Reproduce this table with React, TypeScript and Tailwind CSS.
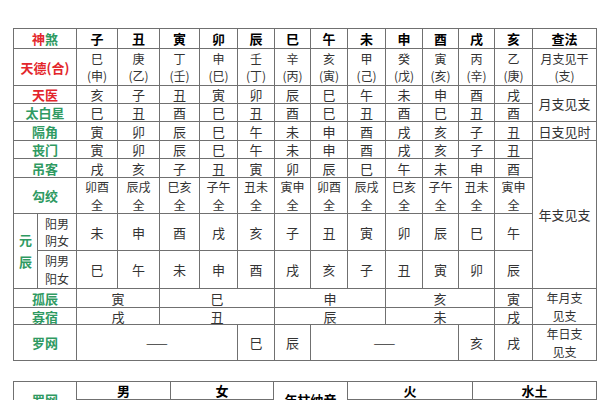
const branches = ['子', '丑', '寅', '卯', '辰', '巳', '午', '未', '申', '酉', '戌', '亥']

const tiande = ['巳', '庚', '丁', '申', '壬', '辛', '亥', '甲', '癸', '寅', '丙', '乙']
const tiandeHe = ['申', '乙', '壬', '巳', '丁', '丙', '寅', '己', '戊', '亥', '辛', '庚']
const tianyi = ['亥', '子', '丑', '寅', '卯', '辰', '巳', '午', '未', '申', '酉', '戌']
const taibai = ['巳', '丑', '酉', '巳', '丑', '酉', '巳', '丑', '酉', '巳', '丑', '酉']
const gejiao = ['寅', '卯', '辰', '巳', '午', '未', '申', '酉', '戌', '亥', '子', '丑']
const diaoke = ['戌', '亥', '子', '丑', '寅', '卯', '辰', '巳', '午', '未', '申', '酉']
const goujiao = ['卯酉', '辰戌', '巳亥', '子午', '丑未', '寅申', '卯酉', '辰戌', '巳亥', '子午', '丑未', '寅申']
const yuanchen1 = ['未', '申', '酉', '戌', '亥', '子', '丑', '寅', '卯', '辰', '巳', '午']
const yuanchen2 = ['巳', '午', '未', '申', '酉', '戌', '亥', '子', '丑', '寅', '卯', '辰']

const widths = [24, 39, 41, 42, 40, 38, 37, 36, 37, 38, 37, 36, 36, 38, 64]

const td = 'border border-[#707070] text-center align-middle p-0'
const two = ' text-[12px] leading-[17.5px]'
const red = 'text-[#e3262b] font-bold'
const green = 'text-[#2f9a62] font-bold'
const head = ' font-bold text-black'

function Cells({ items }: { items: string[] }) {
  return (
    <>
      {items.map((c, i) => (
        <td key={i} className={td}>
          {c}
        </td>
      ))}
    </>
  )
}

export default function App() {
  return (
    <div
      className="w-[600px] h-[400px] overflow-hidden bg-white pt-[28px] pl-[13px] text-[13px] leading-[15px] text-[#333]"
      style={{ fontFamily: '"Noto Sans CJK SC", "Noto Sans", sans-serif' }}
    >
      <table className="border-collapse table-fixed w-[584px]">
        <colgroup>
          {widths.map((w, i) => (
            <col key={i} style={{ width: w }} />
          ))}
        </colgroup>
        <tbody>
          <tr className="h-[20px]">
            <td colSpan={2} className={td + ' font-bold'}>
              <span className="text-[#e3262b]">神</span>
              <span className="text-[#2f9a62]">煞</span>
            </td>
            {branches.map((b) => (
              <td key={b} className={td + head}>
                {b}
              </td>
            ))}
            <td className={td + head}>查法</td>
          </tr>
          <tr className="h-[37px]">
            <td colSpan={2} className={td + ' ' + red}>
              天德(合)
            </td>
            {tiande.map((c, i) => (
              <td key={i} className={td + two}>
                <div>{c}</div>
                <div>({tiandeHe[i]})</div>
              </td>
            ))}
            <td className={td + two}>
              <div>月支见干</div>
              <div>(支)</div>
            </td>
          </tr>
          <tr className="h-[18px]">
            <td colSpan={2} className={td + ' ' + red}>
              天医
            </td>
            <Cells items={tianyi} />
            <td rowSpan={2} className={td}>
              月支见支
            </td>
          </tr>
          <tr className="h-[18px]">
            <td colSpan={2} className={td + ' ' + green}>
              太白星
            </td>
            <Cells items={taibai} />
          </tr>
          <tr className="h-[19px]">
            <td colSpan={2} className={td + ' ' + green}>
              隔角
            </td>
            <Cells items={gejiao} />
            <td className={td}>日支见时</td>
          </tr>
          <tr className="h-[18px]">
            <td colSpan={2} className={td + ' ' + green}>
              丧门
            </td>
            <Cells items={gejiao} />
            <td rowSpan={5} className={td}>
              年支见支
            </td>
          </tr>
          <tr className="h-[19px]">
            <td colSpan={2} className={td + ' ' + green}>
              吊客
            </td>
            <Cells items={diaoke} />
          </tr>
          <tr className="h-[36px]">
            <td colSpan={2} className={td + ' ' + green}>
              勾绞
            </td>
            {goujiao.map((c, i) => (
              <td key={i} className={td + two}>
                <div>{c}</div>
                <div>全</div>
              </td>
            ))}
          </tr>
          <tr className="h-[37px]">
            <td rowSpan={2} className={td + ' ' + green + ' leading-[22px]'}>
              <div>元</div>
              <div>辰</div>
            </td>
            <td className={td + two}>
              <div>阳男</div>
              <div>阴女</div>
            </td>
            <Cells items={yuanchen1} />
          </tr>
          <tr className="h-[38px]">
            <td className={td + two}>
              <div>阴男</div>
              <div>阳女</div>
            </td>
            <Cells items={yuanchen2} />
          </tr>
          <tr className="h-[19px]">
            <td colSpan={2} className={td + ' ' + green}>
              孤辰
            </td>
            <td colSpan={2} className={td}>寅</td>
            <td colSpan={3} className={td}>巳</td>
            <td colSpan={3} className={td}>申</td>
            <td colSpan={3} className={td}>亥</td>
            <td className={td}>寅</td>
            <td rowSpan={2} className={td + two}>
              <div>年月支</div>
              <div>见支</div>
            </td>
          </tr>
          <tr className="h-[17px]">
            <td colSpan={2} className={td + ' ' + green}>
              寡宿
            </td>
            <td colSpan={2} className={td}>戌</td>
            <td colSpan={3} className={td}>丑</td>
            <td colSpan={3} className={td}>辰</td>
            <td colSpan={3} className={td}>未</td>
            <td className={td}>戌</td>
          </tr>
          <tr className="h-[36px]">
            <td colSpan={2} className={td + ' ' + green}>
              罗网
            </td>
            <td colSpan={4} className={td}>——</td>
            <td className={td}>巳</td>
            <td className={td}>辰</td>
            <td colSpan={4} className={td}>——</td>
            <td className={td}>亥</td>
            <td className={td}>戌</td>
            <td className={td + two}>
              <div>年日支</div>
              <div>见支</div>
            </td>
          </tr>
        </tbody>
      </table>

      <table className="border-collapse table-fixed w-[584px] mt-[20px]">
        <colgroup>
          <col style={{ width: 63 }} />
          <col style={{ width: 94 }} />
          <col style={{ width: 103 }} />
          <col style={{ width: 74 }} />
          <col style={{ width: 125 }} />
          <col style={{ width: 124 }} />
        </colgroup>
        <tbody>
          <tr className="h-[18px]">
            <td rowSpan={2} className={td + ' ' + green}>
              罗网
            </td>
            <td className={td + head}>男</td>
            <td className={td + head}>女</td>
            <td rowSpan={2} className={td + head}>
              年柱纳音
            </td>
            <td className={td + head}>火</td>
            <td className={td + head}>水土</td>
          </tr>
          <tr className="h-[18px]">
            <td className={td}>辰</td>
            <td className={td}>戌</td>
            <td className={td}>戌亥</td>
            <td className={td}>辰巳</td>
          </tr>
        </tbody>
      </table>
    </div>
  )
}
